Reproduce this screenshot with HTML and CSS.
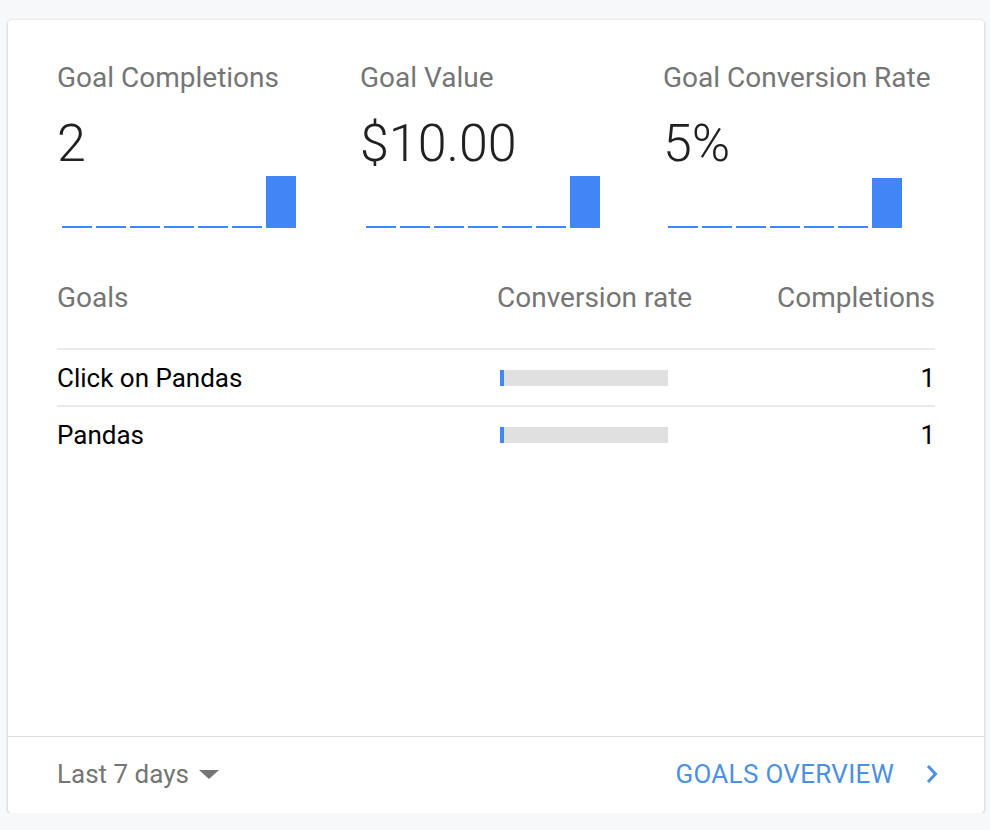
FILE: index.html
```html
<!DOCTYPE html>
<html>
<head>
<meta charset="utf-8">
<link rel="stylesheet" href="styles.css">
</head>
<body>
<div class="card">
  <div class="main">
    <div class="metrics">
      <div class="metric">
        <div class="m-title">Goal Completions</div>
        <div class="m-value">2</div>
        <div class="spark">
          <span class="bar"></span><span class="bar"></span><span class="bar"></span><span class="bar"></span><span class="bar"></span><span class="bar"></span><span class="bar" style="height:52px"></span>
        </div>
      </div>
      <div class="metric">
        <div class="m-title">Goal Value</div>
        <div class="m-value">$10.00</div>
        <div class="spark">
          <span class="bar"></span><span class="bar"></span><span class="bar"></span><span class="bar"></span><span class="bar"></span><span class="bar"></span><span class="bar" style="height:52px"></span>
        </div>
      </div>
      <div class="metric">
        <div class="m-title">Goal Conversion Rate</div>
        <div class="m-value">5%</div>
        <div class="spark">
          <span class="bar"></span><span class="bar"></span><span class="bar"></span><span class="bar"></span><span class="bar"></span><span class="bar"></span><span class="bar" style="height:50px"></span>
        </div>
      </div>
    </div>
    <div class="table">
      <div class="thead">
        <div class="c-goal">Goals</div>
        <div class="c-rate">Conversion rate</div>
        <div class="c-comp">Completions</div>
      </div>
      <div class="row">
        <div class="c-goal">Click on Pandas</div>
        <div class="c-rate"><div class="track"><div class="fill" style="width:4px"></div></div></div>
        <div class="c-comp">1</div>
      </div>
      <div class="row">
        <div class="c-goal">Pandas</div>
        <div class="c-rate"><div class="track"><div class="fill" style="width:4px"></div></div></div>
        <div class="c-comp">1</div>
      </div>
    </div>
  </div>
  <div class="footer">
    <div class="range">Last 7 days <span class="caret"></span></div>
    <a class="link" href="#">GOALS OVERVIEW
      <svg class="chev" width="16" height="22" viewBox="0 0 16 22"><path d="M4 3 L11.5 11 L4 19" fill="none" stroke="#4d90e0" stroke-width="3"/></svg>
    </a>
  </div>
</div>
</body>
</html>
```
FILE: styles.css
```css
html, body {
  margin: 0;
  padding: 0;
  background: #f7f8fa;
  font-family: Roboto, "Liberation Sans", sans-serif;
}
.card {
  margin: 20px 0 0 8px;
  width: 976px;
  height: 793px;
  background: #fff;
  border-radius: 3px;
  box-shadow: 0 1px 3px rgba(0,0,0,0.25), 0 0 1px rgba(0,0,0,0.12);
  display: flex;
  flex-direction: column;
}
.main {
  flex: 1;
  padding: 0 49px;
}
.metrics {
  display: flex;
  padding-top: 42px;
}
.metric {
  width: 303px;
  flex-shrink: 0;
}
.metric:last-child {
  width: 272px;
}
.m-title {
  font-size: 28px;
  color: #757575;
  line-height: 32px;
  white-space: nowrap;
}
.m-value {
  font-size: 52px;
  font-weight: 300;
  color: #212121;
  line-height: 60px;
  margin-top: 20px;
}
.spark {
  display: flex;
  align-items: flex-end;
  gap: 4px;
  height: 52px;
  margin-left: 5px;
  margin-top: 2px;
}
.metric:nth-child(2) .spark { margin-left: 6px; }
.bar {
  width: 30px;
  height: 2px;
  background: #4285f4;
}
.table {
  margin-top: 52px;
}
.thead, .row {
  display: flex;
  align-items: center;
}
.thead {
  line-height: 36px;
  padding-bottom: 32px;
  font-size: 28px;
  color: #757575;
  border-bottom: 2px solid #ebebeb;
}
.row {
  height: 55px;
  font-size: 26px;
  color: #000;
  border-bottom: 2px solid #ebebeb;
}
.row:last-child { border-bottom: none; }
.c-goal { flex: 1; }
.c-rate { width: 245px; }
.c-comp { width: 193px; text-align: right; }
.row .c-rate { padding-left: 3px; box-sizing: border-box; }
.track {
  width: 168px;
  height: 16px;
  background: #e0e0e0;
}
.fill {
  height: 16px;
  background: #4285f4;
}
.footer {
  height: 77px;
  box-sizing: border-box;
  border-top: 1px solid #e0e0e0;
  display: flex;
  align-items: center;
  justify-content: space-between;
  padding: 0 44px 3px 49px;
}
.range {
  font-size: 26px;
  color: #757575;
  display: flex;
  align-items: center;
}
.caret {
  width: 0;
  height: 0;
  border-left: 10px solid transparent;
  border-right: 10px solid transparent;
  border-top: 9px solid #757575;
  margin-left: 10px;
  margin-top: 2px;
}
.link {
  font-size: 26px;
  color: #4d90e0;
  text-decoration: none;
  display: flex;
  align-items: center;
  letter-spacing: 0.3px;
}
.chev {
  margin-left: 30px;
}
```
